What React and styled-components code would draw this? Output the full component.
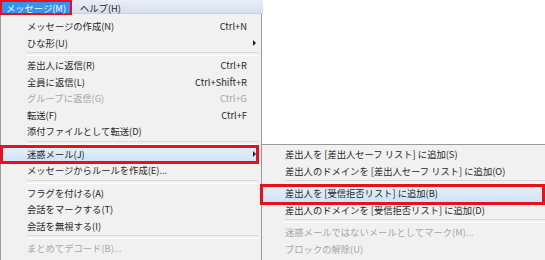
import React from 'react'
import styled, { createGlobalStyle, css } from 'styled-components'

const GlobalStyle = createGlobalStyle`
  * { box-sizing: border-box; }
  body {
    margin: 0;
    background: #ffffff;
  }
`

const Page = styled.div`
  position: relative;
  width: 545px;
  height: 260px;
  overflow: hidden;
  background: #ffffff;
  font-family: 'Noto Sans CJK JP', 'Noto Sans', sans-serif;
  font-size: 9.3px;
  color: #262626;
`

const MenuBar = styled.div`
  display: flex;
  width: 263px;
  height: 14px;
  background: linear-gradient(#e9eef8, #d6dfee);
  border-bottom: 1px solid #c9d3e3;
`

const BarItem = styled.div`
  display: flex;
  align-items: center;
  height: 15px;
  padding: 0 0 0 8px;
  white-space: nowrap;
  ${(p) =>
    p.$active &&
    css`
      width: 72px;
      padding: 0;
      justify-content: center;
      background: #3592f0;
      color: #ffffff;
      box-shadow: inset 0 0 0 2px #e8101a;
    `}
`

const Menu = styled.div`
  width: 262px;
  border: 1px solid #9a9a9a;
  border-top: none;
  background: #f1f1f1;
  padding: 4px 0 6px;
`

const SubMenu = styled.div`
  position: absolute;
  left: 100%;
  top: -1.5px;
  width: 292px;
  border: 1px solid #9a9a9a;
  background: #f1f1f1;
  padding: 1px 0 6px;
  z-index: 2;
`

const Item = styled.div`
  position: relative;
  display: flex;
  align-items: center;
  height: 16.5px;
  padding: 0 14px 0 ${(p) => p.$indent}px;
  white-space: nowrap;
  color: ${(p) => (p.$disabled ? '#a6a6a6' : '#262626')};
  ${(p) =>
    p.$hot &&
    css`
      background: linear-gradient(#e4f0fb, #cfe3f5);
    `}
`

const Label = styled.span`
  flex: 1;
`

const Shortcut = styled.span`
  text-align: right;
`

const Arrow = styled.span`
  position: absolute;
  right: 5px;
  top: 50%;
  transform: translateY(-50%);
  width: 0;
  height: 0;
  border-left: 3px solid #222;
  border-top: 3px solid transparent;
  border-bottom: 3px solid transparent;
`

const Mark = styled.span`
  position: absolute;
  inset: ${(p) => p.$inset};
  border: 3px solid #e8101a;
  pointer-events: none;
  z-index: 1;
`

const Separator = styled.div`
  height: 6px;
  margin: 0 3px 0 ${(p) => p.$indent}px;
  display: flex;
  align-items: center;

  &::before {
    content: '';
    flex: 1;
    height: 2px;
    border-top: 1px solid #d8d8d8;
    border-bottom: 1px solid #ffffff;
  }
`

const junkItems = [
  { label: '差出人を [差出人セーフ リスト] に追加(S)' },
  { label: '差出人のドメインを [差出人セーフ リスト] に追加(O)' },
  { sep: true },
  { label: '差出人を [受信拒否リスト] に追加(B)', hot: true, mark: '-1px 7px -3px -2px' },
  { label: '差出人のドメインを [受信拒否リスト] に追加(D)' },
  { sep: true },
  { label: '迷惑メールではないメールとしてマーク(M)...', disabled: true },
  { label: 'ブロックの解除(U)', disabled: true },
]

const mainItems = [
  { label: 'メッセージの作成(N)', key: 'Ctrl+N' },
  { label: 'ひな形(U)', arrow: true },
  { sep: true },
  { label: '差出人に返信(R)', key: 'Ctrl+R' },
  { label: '全員に返信(L)', key: 'Ctrl+Shift+R' },
  { label: 'グループに返信(G)', key: 'Ctrl+G', disabled: true },
  { label: '転送(F)', key: 'Ctrl+F' },
  { label: '添付ファイルとして転送(D)' },
  { sep: true },
  { label: '迷惑メール(J)', arrow: true, hot: true, mark: '-1px 2px -2px -1px', sub: junkItems },
  { label: 'メッセージからルールを作成(E)...' },
  { sep: true },
  { label: 'フラグを付ける(A)' },
  { label: '会話をマークする(T)' },
  { label: '会話を無視する(I)' },
  { sep: true },
  { label: 'まとめてデコード(B)...', disabled: true },
]

function MenuList({ items, indent }) {
  return items.map((it, i) =>
    it.sep ? (
      <Separator key={i} $indent={indent} />
    ) : (
      <Item key={i} $indent={indent} $hot={it.hot} $disabled={it.disabled}>
        <Label>{it.label}</Label>
        {it.key && <Shortcut>{it.key}</Shortcut>}
        {it.arrow && <Arrow />}
        {it.mark && <Mark $inset={it.mark} />}
        {it.sub && (
          <SubMenu>
            <MenuList items={it.sub} indent={23} />
          </SubMenu>
        )}
      </Item>
    )
  )
}

export default function App() {
  return (
    <Page>
      <GlobalStyle />
      <MenuBar>
        <BarItem $active>メッセージ(M)</BarItem>
        <BarItem>ヘルプ(H)</BarItem>
      </MenuBar>
      <Menu>
        <MenuList items={mainItems} indent={26} />
      </Menu>
    </Page>
  )
}
